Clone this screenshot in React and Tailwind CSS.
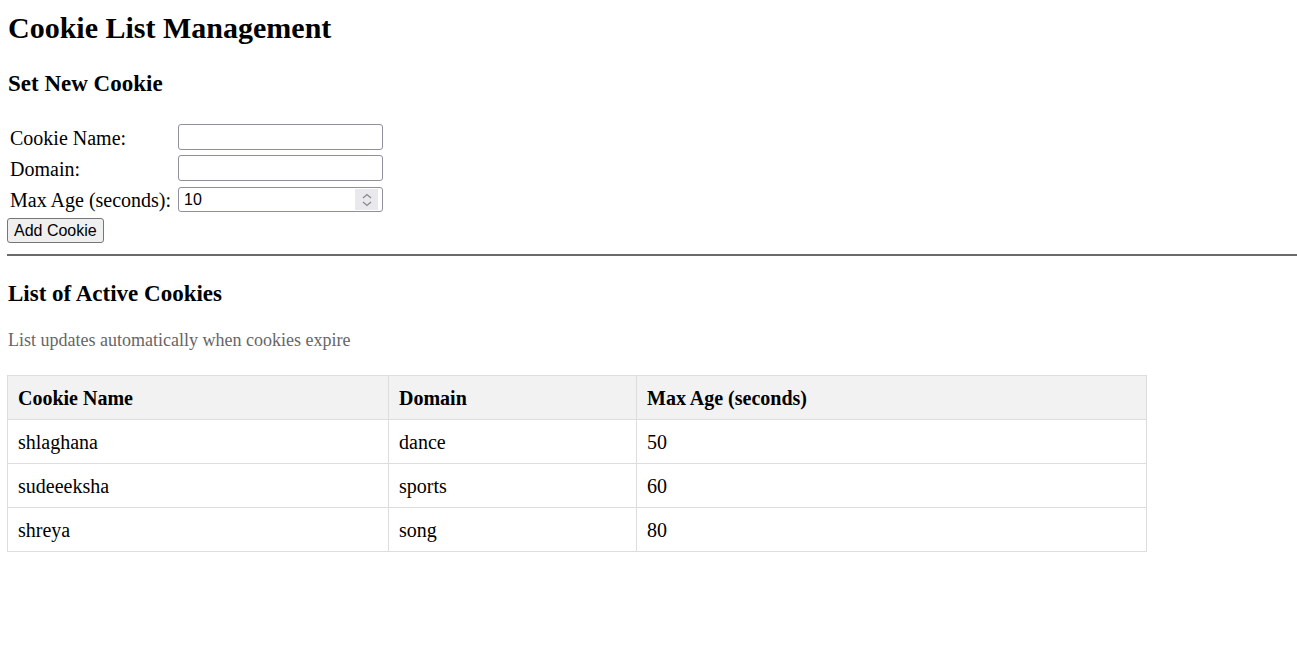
import React from "react";

const rows = [
  ["shlaghana", "dance", "50"],
  ["sudeeeksha", "sports", "60"],
  ["shreya", "song", "80"],
];

function Spinner() {
  return (
    <div className="absolute right-[4px] top-[1px] w-[23px] h-[21px] bg-[#e9e9ed] flex flex-col items-center justify-center gap-[2px]">
      <svg width="10" height="6" viewBox="0 0 10 6" fill="none" stroke="#8a8a8a" strokeWidth="1.3">
        <path d="M1 5 L5 1.5 L9 5" />
      </svg>
      <svg width="10" height="6" viewBox="0 0 10 6" fill="none" stroke="#8a8a8a" strokeWidth="1.3">
        <path d="M1 1 L5 4.5 L9 1" />
      </svg>
    </div>
  );
}

function Field({ label, value, spinner, mt, h }) {
  return (
    <div className={`flex items-center ${h} ${mt}`}>
      <span className="w-[171px] pl-[3px] pt-[2px] text-[20px] leading-[23px] whitespace-nowrap">{label}</span>
      <div className={`relative w-[205px] ${h} border border-[#8f8f9d] rounded-[3px] bg-white`}>
        {value && (
          <span className="absolute left-[5px] top-[3px] font-['Liberation_Sans',Arial,sans-serif] text-[16px] leading-[18px]">
            {value}
          </span>
        )}
        {spinner && <Spinner />}
      </div>
    </div>
  );
}

export default function App() {
  return (
    <div className="w-[1297px] h-[656px] bg-white text-black font-['Liberation_Serif','Times_New_Roman',serif] text-[16px] pt-[10px] overflow-hidden">
      <div className="pl-[7px]">
        <h1 className="text-[30px] font-bold leading-[35px] pl-[1px]">Cookie List Management</h1>
        <h2 className="text-[23px] font-bold leading-[27px] mt-[25px] pl-[1px]">Set New Cookie</h2>
        <div className="mt-[27px]">
          <Field label="Cookie Name:" h="h-[26px]" />
          <Field label="Domain:" mt="mt-[5px]" h="h-[26px]" />
          <Field label="Max Age (seconds):" value="10" spinner mt="mt-[6px]" h="h-[25px]" />
        </div>
        <button className="mt-[6px] h-[25px] px-[6px] border border-[#767676] rounded-[3px] bg-[#efefef] font-['Liberation_Sans',Arial,sans-serif] text-[16px] leading-[18px] text-black">
          Add Cookie
        </button>
        <div className="mt-[11px] h-[2px] w-[1290px] bg-[#6a6a6a]" />
        <h2 className="text-[23px] font-bold leading-[27px] mt-[24px] pl-[1px]">List of Active Cookies</h2>
        <p className="mt-[23px] text-[18px] leading-[21px] text-[#666666] pl-[1px]">List updates automatically when cookies expire</p>
        <table className="mt-[24px] border-collapse w-[1140px] text-[20px]">
          <thead>
            <tr className="bg-[#f2f2f2]">
              <th className="w-[381px] h-[44px] border border-[#dddddd] px-[10px] pt-[2px] text-left font-bold leading-[23px]">Cookie Name</th>
              <th className="w-[248px] h-[44px] border border-[#dddddd] px-[10px] pt-[2px] text-left font-bold leading-[23px]">Domain</th>
              <th className="h-[44px] border border-[#dddddd] px-[10px] pt-[2px] text-left font-bold leading-[23px]">Max Age (seconds)</th>
            </tr>
          </thead>
          <tbody>
            {rows.map((r) => (
              <tr key={r[0]}>
                {r.map((c, i) => (
                  <td key={i} className="h-[44px] border border-[#dddddd] px-[10px] pt-[2px] leading-[23px]">{c}</td>
                ))}
              </tr>
            ))}
          </tbody>
        </table>
      </div>
    </div>
  );
}
